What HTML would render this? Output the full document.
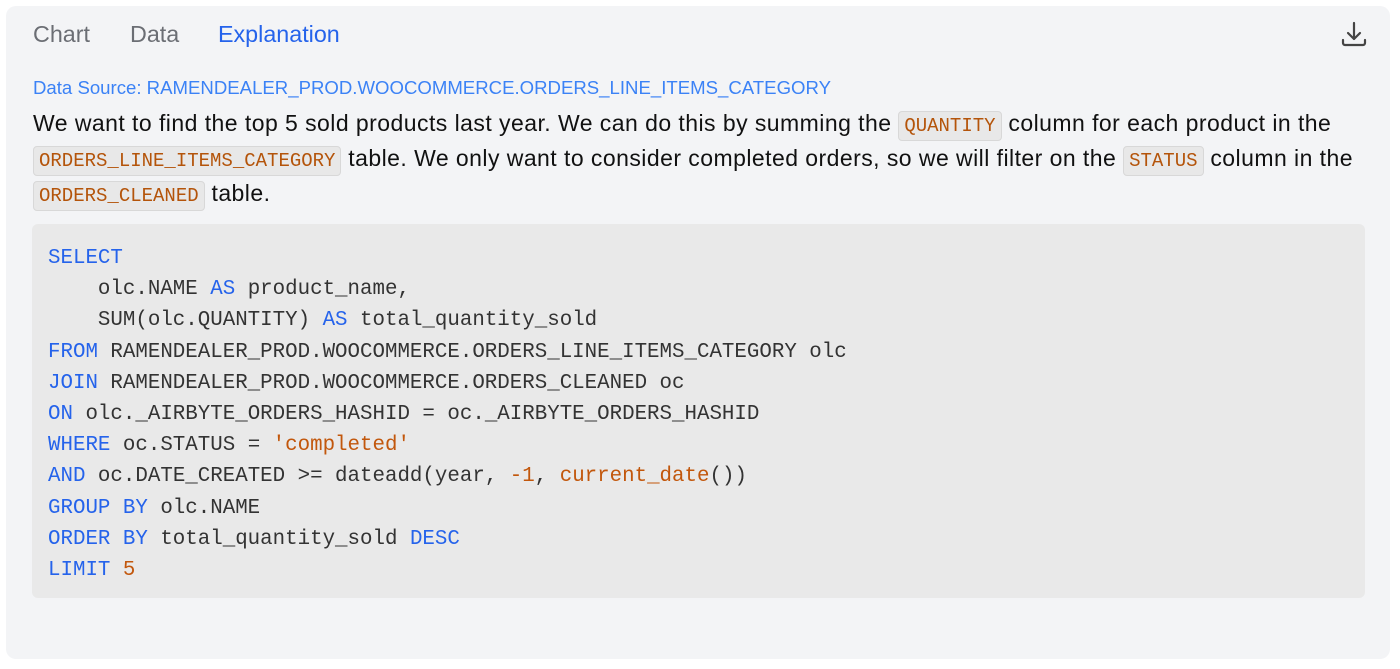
<!DOCTYPE html>
<html><head><style>
body{margin:0;background:#fff;width:1400px;height:669px;overflow:hidden;font-family:"Liberation Sans",sans-serif}
.card{position:absolute;left:6px;top:6px;width:1384px;height:653px;background:#f3f4f6;border-radius:10px}
.tab{position:absolute;top:15px;font-size:23.3px;color:#6b6e74}
.src{position:absolute;left:27px;top:71px;font-size:18.6px;color:#3b82f6;letter-spacing:0}
.txt{position:absolute;left:27px;top:100px;width:1350px;font-size:23px;line-height:34px;color:#111;letter-spacing:0.45px}
code{font-family:"Liberation Mono",monospace;font-size:19px;line-height:22px;color:#b4540a;background:#e8e8e8;border:1px solid #d8d8d8;border-radius:4px;padding:3px 5px;letter-spacing:0;display:inline-block}
pre{position:absolute;left:26px;top:218px;width:1301px;height:344px;margin:0;padding:19px 16px 11px;background:#e9e9e9;border-radius:6px;font-family:"Liberation Mono",monospace;font-size:20.8px;line-height:31.2px;color:#333}
.k{color:#2563eb}.o{color:#c2570c}
</style></head><body>
<div class="card">
<div class="tab" style="left:27px">Chart</div>
<div class="tab" style="left:124px">Data</div>
<div class="tab" style="left:212px;color:#2563eb">Explanation</div>
<svg style="position:absolute;left:1334px;top:13px" width="28" height="30" viewBox="0 0 28 30" fill="none" stroke="#444" stroke-width="2.2" stroke-linecap="round" stroke-linejoin="round"><path d="M14 4v16M8 14l6 6 6-6M3 21v3a2 2 0 0 0 2 2h18a2 2 0 0 0 2-2v-3"/></svg>
<div class="src">Data Source: RAMENDEALER_PROD.WOOCOMMERCE.ORDERS_LINE_ITEMS_CATEGORY</div>
<div class="txt">We want to find the top 5 sold products last year. We can do this by summing the <code>QUANTITY</code> column for each product in the <code>ORDERS_LINE_ITEMS_CATEGORY</code> table. We only want to consider completed orders, so we will filter on the <code>STATUS</code> column in the <code>ORDERS_CLEANED</code> table.</div>
<pre><span class="k">SELECT</span>
    olc.NAME <span class="k">AS</span> product_name,
    SUM(olc.QUANTITY) <span class="k">AS</span> total_quantity_sold
<span class="k">FROM</span> RAMENDEALER_PROD.WOOCOMMERCE.ORDERS_LINE_ITEMS_CATEGORY olc
<span class="k">JOIN</span> RAMENDEALER_PROD.WOOCOMMERCE.ORDERS_CLEANED oc
<span class="k">ON</span> olc._AIRBYTE_ORDERS_HASHID = oc._AIRBYTE_ORDERS_HASHID
<span class="k">WHERE</span> oc.STATUS = <span class="o">'completed'</span>
<span class="k">AND</span> oc.DATE_CREATED &gt;= dateadd(year, <span class="o">-1</span>, <span class="o">current_date</span>())
<span class="k">GROUP BY</span> olc.NAME
<span class="k">ORDER BY</span> total_quantity_sold <span class="k">DESC</span>
<span class="k">LIMIT</span> <span class="o">5</span></pre>
</div>
</body></html>
